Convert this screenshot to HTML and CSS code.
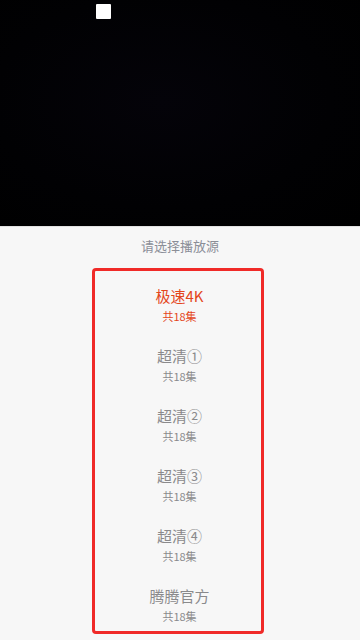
FILE: index.html
```html
<!DOCTYPE html>
<html lang="zh-CN">
<head>
<meta charset="UTF-8" />
<meta name="viewport" content="width=device-width, initial-scale=1" />
<title>请选择播放源</title>
<link rel="stylesheet" href="styles.css">
</head>
<body>

<div class="player">
  <span class="player-mark"></span>
</div>

<div class="sources">
  <div class="sources-title">请选择播放源</div>
  <ul class="source-list">
    <li class="source active">
      <span class="source-name">极速4K</span>
      <span class="source-count">共18集</span>
    </li>
    <li class="source">
      <span class="source-name">超清①</span>
      <span class="source-count">共18集</span>
    </li>
    <li class="source">
      <span class="source-name">超清②</span>
      <span class="source-count">共18集</span>
    </li>
    <li class="source">
      <span class="source-name">超清③</span>
      <span class="source-count">共18集</span>
    </li>
    <li class="source">
      <span class="source-name">超清④</span>
      <span class="source-count">共18集</span>
    </li>
    <li class="source">
      <span class="source-name">腾腾官方</span>
      <span class="source-count">共18集</span>
    </li>
  </ul>
</div>

</body>
</html>
```

FILE: styles.css
```css
html, body {
  margin: 0;
  padding: 0;
}
body {
  font-family: "Noto Sans CJK SC", "Noto Sans", sans-serif;
  background: #f7f7f7;
  width: 360px;
  height: 640px;
  overflow: hidden;
}
.player {
  position: relative;
  height: 226px;
  background: radial-gradient(ellipse at 45% 45%, #040309 0%, #010103 60%, #000 100%);
  border-bottom: 1px solid #e2e2e2;
}
.player-mark {
  position: absolute;
  left: 96px;
  top: 4px;
  width: 15px;
  height: 15px;
  background: #fff;
  border-radius: 1px;
}
.sources {
  display: flex;
  flex-direction: column;
  align-items: center;
}
.sources-title {
  padding-top: 9px;
  line-height: 20px;
  font-size: 13px;
  color: #8b8e97;
  margin-bottom: 12px;
}
.source-list {
  list-style: none;
  margin: 0 4px 0 0;
  padding: 0;
  width: 166px;
  border: 3px solid #f02a28;
  border-radius: 4px;
}
.source {
  display: flex;
  flex-direction: column;
  align-items: center;
  height: 60px;
  box-sizing: border-box;
  padding: 15px 0 0 3px;
  color: #8a8a8c;
}
.source-name {
  font-size: 15px;
  line-height: 20px;
}
.source-count {
  font-size: 11px;
  line-height: 16px;
  margin-top: 2px;
}
.source.active {
  color: #e4461c;
}
```
